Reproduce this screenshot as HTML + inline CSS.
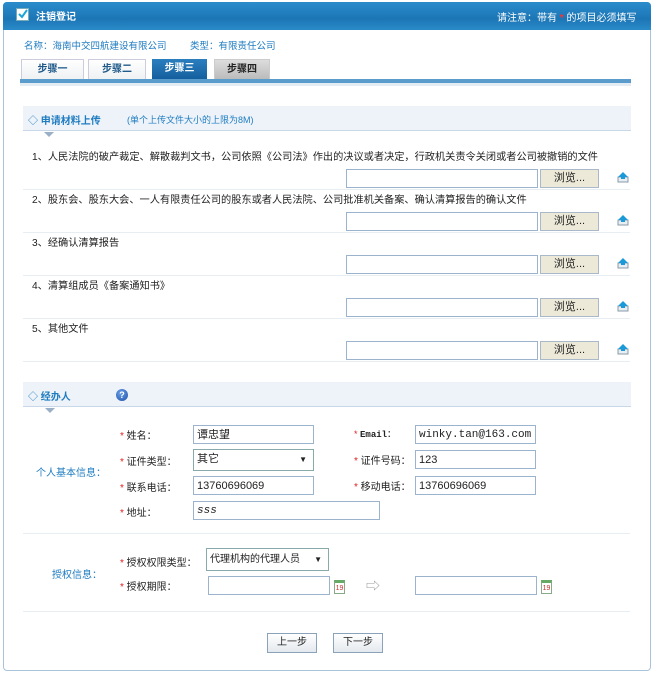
<!DOCTYPE html>
<html><head><meta charset="utf-8"><style>
*{margin:0;padding:0;box-sizing:border-box}
body{width:653px;height:675px;background:#fff;font-family:"Liberation Sans","Noto Sans CJK SC",sans-serif;font-size:10px;color:#222;position:relative;overflow:hidden}
.a{position:absolute;white-space:nowrap}
.frame{position:absolute;left:3px;top:2px;width:648px;height:669px;border:1px solid #a9c3da;border-radius:4px;background:#fff}
.hdr{position:absolute;left:3px;top:2px;width:648px;height:28px;background:linear-gradient(#2b8ccc,#1c76b6 60%,#2a8ac8);border-radius:4px 4px 0 0}
.inp{position:absolute;height:19px;border:1px solid #9bb3cc;background:#fff;font-size:11px;padding:2px 3px;line-height:14px}
.btn{position:absolute;width:59px;height:19px;border:1px solid #a9b9c9;background:#ece9d8;text-align:center;line-height:17px;font-size:11px}
.up{position:absolute;width:12px;height:12px}
.line{position:absolute;left:23px;width:607px;height:1px;background:#e8edf2}
.sec{position:absolute;left:23px;width:608px;height:25px;background:#eef3fa;border-bottom:1px solid #c9d8e8}
.star{color:#e02020}
.blue{color:#1f7cc0}
.tri{position:absolute;width:0;height:0;border-left:5px solid transparent;border-right:5px solid transparent;border-top:5px solid #9ab0c8}
.cal{position:absolute;width:11px;height:14px;border:1px solid #8a8;background:#fff;font-size:7px;color:#c33;text-align:center;line-height:11px;border-top:3px solid #6a6}
.pb{position:absolute;width:50px;height:20px;border:1px solid #8aa3ba;background:linear-gradient(#fff,#e4e9ee);text-align:center;line-height:18px;font-size:10px}
.tab{position:absolute;top:59px;height:21px;text-align:center;line-height:20px;font-weight:bold;font-size:10px}
</style></head><body>
<div class="frame"></div>
<div class="hdr"></div>
<div class="a" style="left:16px;top:8px;width:13px;height:13px;background:#fff;border:1px solid #7ab"><svg width="11" height="11" style="position:absolute;left:0;top:0"><path d="M2 5 L5 8 L10 1" stroke="#1aa6d8" stroke-width="2" fill="none"/></svg></div>
<div class="a" style="left:36px;top:8px;color:#fff;font-weight:bold;font-size:10px">注销登记</div>
<div class="a" style="left:497px;top:9px;color:#fff;font-size:10px">请注意：带有 <span style="color:#ff3030;font-weight:bold">*</span> 的项目必须填写</div>

<div class="a blue" style="left:24px;top:38px;font-size:9.5px">名称：海南中交四航建设有限公司</div>
<div class="a blue" style="left:190px;top:38px;font-size:9.5px">类型：有限责任公司</div>

<div class="tab" style="left:21px;width:63px;border:1px solid #ccd;border-bottom:none;background:linear-gradient(#fff,#eef0f2);color:#1f5a8a">步骤一</div>
<div class="tab" style="left:88px;width:58px;border:1px solid #ccd;border-bottom:none;background:linear-gradient(#fff,#eef0f2);color:#1f5a8a">步骤二</div>
<div class="tab" style="left:152px;width:55px;background:linear-gradient(#2b7fbf,#135d9c);color:#fff">步骤三</div>
<div class="tab" style="left:214px;width:56px;border:1px solid #ccc;background:linear-gradient(#ddd,#bbb);color:#222">步骤四</div>
<div class="a" style="left:20px;top:79px;width:611px;height:4px;background:#5a9ccb"></div>
<div class="a" style="left:20px;top:83px;width:611px;height:3px;background:#e3ebf3"></div>

<div class="sec" style="top:106px"></div>
<div class="a blue" style="left:28px;top:112px;font-size:10px">◇ <b>申请材料上传</b></div>
<div class="a blue" style="left:127px;top:113px;font-size:9px">(单个上传文件大小的上限为8M)</div>
<div class="tri" style="left:44px;top:132px"></div>

<div class="a" style="left:32px;top:148px;font-size:10.2px">1、人民法院的破产裁定、解散裁判文书，公司依照《公司法》作出的决议或者决定，行政机关责令关闭或者公司被撤销的文件</div>
<div class="a" style="left:32px;top:191px;font-size:10.2px">2、股东会、股东大会、一人有限责任公司的股东或者人民法院、公司批准机关备案、确认清算报告的确认文件</div>
<div class="a" style="left:32px;top:234px;font-size:10.2px">3、经确认清算报告</div>
<div class="a" style="left:32px;top:277px;font-size:10.2px">4、清算组成员《备案通知书》</div>
<div class="a" style="left:32px;top:320px;font-size:10.2px">5、其他文件</div>

<div class="inp" style="left:346px;top:169px;width:192px"></div><div class="btn" style="left:540px;top:169px">浏览...</div>
<div class="inp" style="left:346px;top:212px;width:192px"></div><div class="btn" style="left:540px;top:212px">浏览...</div>
<div class="inp" style="left:346px;top:255px;width:192px"></div><div class="btn" style="left:540px;top:255px">浏览...</div>
<div class="inp" style="left:346px;top:298px;width:192px"></div><div class="btn" style="left:540px;top:298px">浏览...</div>
<div class="inp" style="left:346px;top:341px;width:192px"></div><div class="btn" style="left:540px;top:341px">浏览...</div>
<svg class="up" style="left:617px;top:171px" viewBox="0 0 12 12"><rect x="1" y="6" width="10" height="5" fill="#e8eef2" stroke="#8899aa"/><path d="M6 1 L11 6 H1 Z" fill="#1a9ad8"/><rect x="4" y="5" width="4" height="3" fill="#1a9ad8"/></svg>
<svg class="up" style="left:617px;top:214px" viewBox="0 0 12 12"><rect x="1" y="6" width="10" height="5" fill="#e8eef2" stroke="#8899aa"/><path d="M6 1 L11 6 H1 Z" fill="#1a9ad8"/><rect x="4" y="5" width="4" height="3" fill="#1a9ad8"/></svg>
<svg class="up" style="left:617px;top:257px" viewBox="0 0 12 12"><rect x="1" y="6" width="10" height="5" fill="#e8eef2" stroke="#8899aa"/><path d="M6 1 L11 6 H1 Z" fill="#1a9ad8"/><rect x="4" y="5" width="4" height="3" fill="#1a9ad8"/></svg>
<svg class="up" style="left:617px;top:300px" viewBox="0 0 12 12"><rect x="1" y="6" width="10" height="5" fill="#e8eef2" stroke="#8899aa"/><path d="M6 1 L11 6 H1 Z" fill="#1a9ad8"/><rect x="4" y="5" width="4" height="3" fill="#1a9ad8"/></svg>
<svg class="up" style="left:617px;top:343px" viewBox="0 0 12 12"><rect x="1" y="6" width="10" height="5" fill="#e8eef2" stroke="#8899aa"/><path d="M6 1 L11 6 H1 Z" fill="#1a9ad8"/><rect x="4" y="5" width="4" height="3" fill="#1a9ad8"/></svg>
<div class="line" style="top:189px"></div><div class="line" style="top:232px"></div><div class="line" style="top:275px"></div><div class="line" style="top:318px"></div><div class="line" style="top:361px"></div>

<div class="sec" style="top:382px"></div>
<div class="a blue" style="left:28px;top:388px;font-size:10px">◇ <b>经办人</b></div>
<div class="a" style="left:116px;top:389px;width:12px;height:12px;border-radius:6px;background:radial-gradient(circle at 40% 35%,#6aa0e8,#1d4fa8);color:#fff;font-size:9px;font-weight:bold;text-align:center;line-height:12px">?</div>
<div class="tri" style="left:45px;top:408px"></div>

<div class="a blue" style="left:36px;top:464px">个人基本信息：</div>
<div class="a" style="left:120px;top:427px"><span class="star">*</span> 姓名：</div>
<div class="a" style="left:120px;top:453px"><span class="star">*</span> 证件类型：</div>
<div class="a" style="left:120px;top:479px"><span class="star">*</span> 联系电话：</div>
<div class="a" style="left:120px;top:504px"><span class="star">*</span> 地址：</div>
<div class="inp" style="left:193px;top:425px;width:121px">谭忠望</div>
<div class="inp" style="left:193px;top:449px;width:121px;height:22px;border-color:#8aa">其它<span style="position:absolute;right:6px;top:3px;font-size:8px">▼</span></div>
<div class="inp" style="left:193px;top:476px;width:121px">13760696069</div>
<div class="inp" style="left:193px;top:501px;width:187px;font-style:italic;font-family:'Liberation Mono',monospace">sss</div>
<div class="a" style="left:354px;top:427px;font-size:9px"><span class="star">*</span> <b style="font-family:'Liberation Mono',monospace">Email</b>：</div>
<div class="a" style="left:354px;top:452px"><span class="star">*</span> 证件号码：</div>
<div class="a" style="left:354px;top:478px"><span class="star">*</span> 移动电话：</div>
<div class="inp" style="left:415px;top:425px;width:121px;font-family:'Liberation Mono',monospace;font-size:11px">winky.tan@163.com</div>
<div class="inp" style="left:415px;top:450px;width:121px">123</div>
<div class="inp" style="left:415px;top:476px;width:121px">13760696069</div>
<div class="line" style="top:533px"></div>

<div class="a blue" style="left:52px;top:566px">授权信息：</div>
<div class="a" style="left:120px;top:554px"><span class="star">*</span> 授权权限类型：</div>
<div class="a" style="left:120px;top:578px"><span class="star">*</span> 授权期限：</div>
<div class="inp" style="left:206px;top:548px;width:123px;height:23px;border-color:#8aa;font-size:10px;padding-top:4px">代理机构的代理人员<span style="position:absolute;right:6px;top:4px;font-size:8px">▼</span></div>
<div class="inp" style="left:208px;top:576px;width:122px"></div>
<div class="cal" style="left:334px;top:580px">19</div>
<div class="a" style="left:366px;top:576px;color:#999;font-size:14px">⇨</div>
<div class="inp" style="left:415px;top:576px;width:122px"></div>
<div class="cal" style="left:541px;top:580px">19</div>
<div class="line" style="top:611px"></div>

<div class="pb" style="left:267px;top:633px">上一步</div>
<div class="pb" style="left:333px;top:633px">下一步</div>
</body></html>
